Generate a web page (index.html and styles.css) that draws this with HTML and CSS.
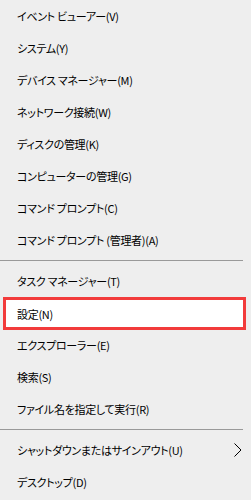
FILE: index.html
```html
<!DOCTYPE html>
<html lang="ja">
<head>
  <meta charset="UTF-8">
  <meta name="viewport" content="width=device-width, initial-scale=1.0">
  <title>Win+X メニュー</title>
  <link rel="stylesheet" href="styles.css">
</head>
<body>
  <div class="menu">
    <div class="group">
      <div class="item">イベント ビューアー(V)</div>
      <div class="item">システム(Y)</div>
      <div class="item">デバイス マネージャー(M)</div>
      <div class="item">ネットワーク接続(W)</div>
      <div class="item">ディスクの管理(K)</div>
      <div class="item">コンピューターの管理(G)</div>
      <div class="item">コマンド プロンプト(C)</div>
      <div class="item">コマンド プロンプト (管理者)(A)</div>
    </div>
    <div class="separator"></div>
    <div class="group">
      <div class="item">タスク マネージャー(T)</div>
      <div class="item selected">設定(N)</div>
      <div class="item">エクスプローラー(E)</div>
      <div class="item">検索(S)</div>
      <div class="item">ファイル名を指定して実行(R)</div>
    </div>
    <div class="separator"></div>
    <div class="group">
      <div class="item has-sub">
        <span>シャットダウンまたはサインアウト(U)</span>
        <svg class="chevron" width="8" height="14" viewBox="0 0 8 14">
          <polyline points="0.5,0.5 7,7 0.5,13.5" fill="none" stroke="#000" stroke-width="1"/>
        </svg>
      </div>
      <div class="item">デスクトップ(D)</div>
    </div>
  </div>
</body>
</html>
```

FILE: styles.css
```css
body {
  margin: 0;
  background-color: #eeeeee;
  font-family: "Noto Sans CJK JP", "Noto Sans", sans-serif;
  font-size: 11px;
  color: #000;
}

.menu {
  width: 251px;
  height: 500px;
  background-color: #eeeeee;
}

.item {
  height: 32px;
  display: flex;
  align-items: center;
  padding-left: 17px;
  font-feature-settings: "palt";
  letter-spacing: -0.3px;
  white-space: nowrap;
  box-sizing: border-box;
}

.item.selected {
  margin: 0 5px 0 3px;
  padding-left: 11px;
  height: 33px;
  margin-bottom: -1px;
  border: 3px solid #f23b3b;
  background-color: #fff;
}

.item.has-sub {
  justify-content: space-between;
  padding-right: 9px;
}

.chevron {
  display: block;
}

.separator {
  height: 1px;
  margin: 4px 8px 4px 0;
  background-color: #999;
}
```
